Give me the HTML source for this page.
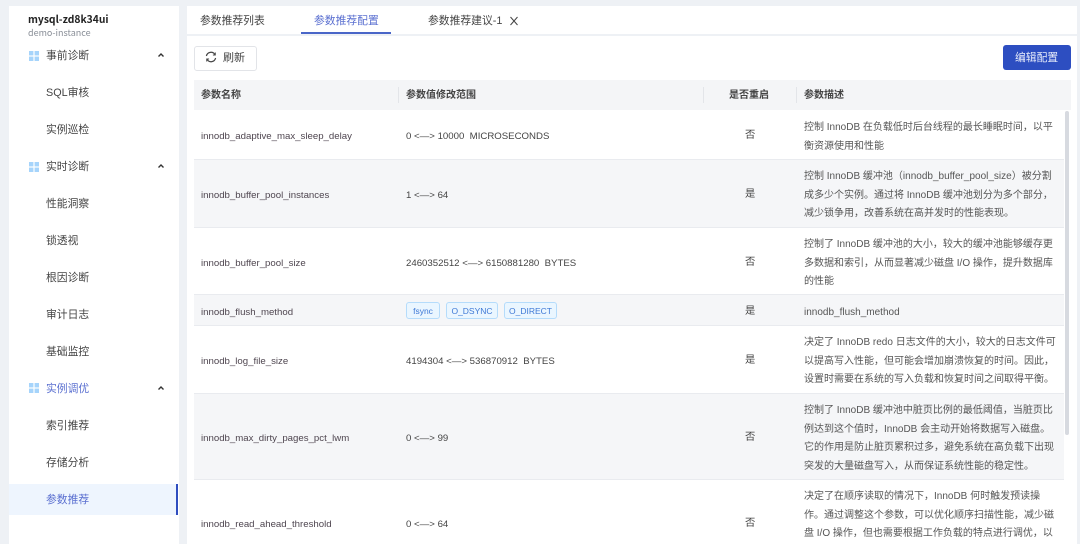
<!DOCTYPE html>
<html lang="zh"><head><meta charset="utf-8"><style>
html,body{margin:0;padding:0}
body{width:1080px;height:544px;overflow:hidden;background:#eef1f5;position:relative;font-family:"Liberation Sans","Noto Sans CJK SC",sans-serif;color:#444;-webkit-font-smoothing:antialiased}
.a{position:absolute;white-space:nowrap}
.box{position:absolute}
.m{font-size:10.8px;left:46px;color:#444;line-height:16px}
.g{width:14px;height:14px;left:27px;position:absolute}
.c{position:absolute;left:156px;margin-top:-1px}
.row{position:absolute;left:194px;width:870px;box-sizing:border-box;border-bottom:1px solid #e9ebef}
.n{font-size:9.65px;left:201px;color:#4f4650;line-height:16px;margin-top:2px}
.r{font-size:9.65px;left:406px;color:#444;line-height:16px;margin-top:2px}
.y{font-size:10.3px;left:745px;color:#444;line-height:16px;margin-top:1px}
.d{font-size:10px;left:804px;color:#555;line-height:18.6px;margin-top:2px}
.h{font-size:10px;font-weight:700;color:#444;line-height:16px;top:88px}
.s{position:absolute;top:87px;width:1px;height:16px;background:#e3e5e9}
.t{position:absolute;top:302px;height:17px;box-sizing:border-box;border:1px solid #b5dcfb;background:#eaf6ff;color:#3f79d6;font-size:8.5px;line-height:16px;border-radius:3px;text-align:center}
.tab{font-size:10.8px;top:13px;line-height:16px;color:#444}
</style></head><body>
<div class="box" style="left:9px;top:6px;width:170px;height:538px;background:#fff"></div>
<div class="box" style="left:187px;top:6px;width:890px;height:28px;background:#fff"></div>
<div class="box" style="left:187px;top:36px;width:890px;height:508px;background:#fff"></div>

<div class="a" style="left:28px;top:11px;font-family:'Noto Sans CJK SC','Liberation Sans',sans-serif;font-size:10.3px;font-weight:700;color:#222;line-height:16px">mysql-zd8k34ui</div>
<div class="a" style="left:28px;top:25px;font-family:'Noto Sans CJK SC','Liberation Sans',sans-serif;font-size:9px;color:#8a8f98;line-height:16px">demo-instance</div>

<svg class="g" style="top:49px" viewBox="0 0 14 14"><g fill="#a6d4fb"><rect x="2" y="2" width="4.4" height="4.4"/><rect x="7.6" y="2" width="4.4" height="4.4"/><rect x="2" y="7.6" width="4.4" height="4.4"/><rect x="7.6" y="7.6" width="4.4" height="4.4"/></g></svg>
<div class="a m" style="top:48px">事前诊断</div>
<svg class="c" style="top:51px" width="10" height="10" viewBox="0 0 10 10"><path d="M2.5 6.5L5 4L7.5 6.5" fill="none" stroke="#333" stroke-width="1.4"/></svg>
<div class="a m" style="top:85px">SQL审核</div>
<div class="a m" style="top:122px">实例巡检</div>
<svg class="g" style="top:160px" viewBox="0 0 14 14"><g fill="#a6d4fb"><rect x="2" y="2" width="4.4" height="4.4"/><rect x="7.6" y="2" width="4.4" height="4.4"/><rect x="2" y="7.6" width="4.4" height="4.4"/><rect x="7.6" y="7.6" width="4.4" height="4.4"/></g></svg>
<div class="a m" style="top:159px">实时诊断</div>
<svg class="c" style="top:162px" width="10" height="10" viewBox="0 0 10 10"><path d="M2.5 6.5L5 4L7.5 6.5" fill="none" stroke="#333" stroke-width="1.4"/></svg>
<div class="a m" style="top:196px">性能洞察</div>
<div class="a m" style="top:233px">锁透视</div>
<div class="a m" style="top:270px">根因诊断</div>
<div class="a m" style="top:307px">审计日志</div>
<div class="a m" style="top:344px">基础监控</div>
<svg class="g" style="top:381px" viewBox="0 0 14 14"><g fill="#a6d4fb"><rect x="2" y="2" width="4.4" height="4.4"/><rect x="7.6" y="2" width="4.4" height="4.4"/><rect x="2" y="7.6" width="4.4" height="4.4"/><rect x="7.6" y="7.6" width="4.4" height="4.4"/></g></svg>
<div class="a m" style="top:381px;color:#5a6fd0">实例调优</div>
<svg class="c" style="top:384px" width="10" height="10" viewBox="0 0 10 10"><path d="M2.5 6.5L5 4L7.5 6.5" fill="none" stroke="#333" stroke-width="1.4"/></svg>
<div class="a m" style="top:418px">索引推荐</div>
<div class="a m" style="top:455px">存储分析</div>
<div class="box" style="left:9px;top:484px;width:169px;height:31px;background:#eef5fe"></div>
<div class="box" style="left:176px;top:484px;width:2px;height:31px;background:#2f4dbf"></div>
<div class="a m" style="top:492px;color:#5a6fd0">参数推荐</div>

<div class="a tab" style="left:200px">参数推荐列表</div>
<div class="a tab" style="left:314px;color:#5a6fd0">参数推荐配置</div>
<div class="box" style="left:301px;top:32px;width:90px;height:2px;background:#4a66c8"></div>
<div class="a tab" style="left:428px">参数推荐建议-1</div>
<svg class="box" style="left:509px;top:15px" width="10" height="12" viewBox="0 0 10 12"><path d="M1.5 2L8.5 10M8.5 2L1.5 10" stroke="#444" stroke-width="1" fill="none"/></svg>

<div class="box" style="left:194px;top:46px;width:61px;height:23px;border:1px solid #e2e4e8;border-radius:3px;background:#fff"></div>
<svg class="box" style="left:205px;top:51px" width="12" height="12" viewBox="0 0 12 12"><path d="M1.4 5A4.7 4.7 0 0 1 9.9 3.4M10.6 7A4.7 4.7 0 0 1 2.1 8.6" fill="none" stroke="#444" stroke-width="1.2"/><path d="M10.3 1.5V4H7.9M1.7 10.5V8H4.1" fill="none" stroke="#444" stroke-width="0.9"/></svg>
<div class="a" style="left:223px;top:50px;font-size:11px;line-height:16px;color:#444">刷新</div>

<div class="box" style="left:1003px;top:45px;width:68px;height:25px;background:#2d4ec1;border-radius:3px"></div>
<div class="a" style="left:1015px;top:50px;font-size:10.8px;line-height:16px;color:#e6ebfa">编辑配置</div>

<div class="box" style="left:194px;top:80px;width:877px;height:30px;background:#f4f5f7"></div>
<div class="a h" style="left:201px">参数名称</div>
<div class="s" style="left:398px"></div>
<div class="a h" style="left:406px">参数值修改范围</div>
<div class="s" style="left:703px"></div>
<div class="a h" style="left:729px">是否重启</div>
<div class="s" style="left:796px"></div>
<div class="a h" style="left:804px">参数描述</div>

<div class="row" style="top:110px;height:50px;background:#fff"></div>
<div class="row" style="top:160px;height:68px;background:#f5f6f8"></div>
<div class="row" style="top:228px;height:67px;background:#fff"></div>
<div class="row" style="top:295px;height:31px;background:#f5f6f8"></div>
<div class="row" style="top:326px;height:68px;background:#fff"></div>
<div class="row" style="top:394px;height:86px;background:#f5f6f8"></div>

<div class="box" style="left:1065px;top:111px;width:4px;height:324px;background:#d7dae0;border-radius:2px"></div>

<div class="a n" style="top:127px">innodb_adaptive_max_sleep_delay</div>
<div class="a r" style="top:127px">0 &lt;—&gt; 10000 &nbsp;MICROSECONDS</div>
<div class="a y" style="top:127px">否</div>
<div class="a d" style="top:117px">控制 InnoDB 在负载低时后台线程的最长睡眠时间，以平<br>衡资源使用和性能</div>

<div class="a n" style="top:186px">innodb_buffer_pool_instances</div>
<div class="a r" style="top:186px">1 &lt;—&gt; 64</div>
<div class="a y" style="top:186px">是</div>
<div class="a d" style="top:166px">控制 InnoDB 缓冲池（innodb_buffer_pool_size）被分割<br>成多少个实例。通过将 InnoDB 缓冲池划分为多个部分，<br>减少锁争用，改善系统在高并发时的性能表现。</div>

<div class="a n" style="top:254px">innodb_buffer_pool_size</div>
<div class="a r" style="top:254px">2460352512 &lt;—&gt; 6150881280 &nbsp;BYTES</div>
<div class="a y" style="top:254px">否</div>
<div class="a d" style="top:234px">控制了 InnoDB 缓冲池的大小，较大的缓冲池能够缓存更<br>多数据和索引，从而显著减少磁盘 I/O 操作，提升数据库<br>的性能</div>

<div class="a n" style="top:303px">innodb_flush_method</div>
<div class="t" style="left:406px;width:34px">fsync</div>
<div class="t" style="left:446px;width:52px">O_DSYNC</div>
<div class="t" style="left:504px;width:53px">O_DIRECT</div>
<div class="a y" style="top:303px">是</div>
<div class="a d" style="top:302px">innodb_flush_method</div>

<div class="a n" style="top:352px">innodb_log_file_size</div>
<div class="a r" style="top:352px">4194304 &lt;—&gt; 536870912 &nbsp;BYTES</div>
<div class="a y" style="top:352px">是</div>
<div class="a d" style="top:332px">决定了 InnoDB redo 日志文件的大小，较大的日志文件可<br>以提高写入性能，但可能会增加崩溃恢复的时间。因此，<br>设置时需要在系统的写入负载和恢复时间之间取得平衡。</div>

<div class="a n" style="top:429px">innodb_max_dirty_pages_pct_lwm</div>
<div class="a r" style="top:429px">0 &lt;—&gt; 99</div>
<div class="a y" style="top:429px">否</div>
<div class="a d" style="top:400px">控制了 InnoDB 缓冲池中脏页比例的最低阈值，当脏页比<br>例达到这个值时，InnoDB 会主动开始将数据写入磁盘。<br>它的作用是防止脏页累积过多，避免系统在高负载下出现<br>突发的大量磁盘写入，从而保证系统性能的稳定性。</div>

<div class="a n" style="top:515px">innodb_read_ahead_threshold</div>
<div class="a r" style="top:515px">0 &lt;—&gt; 64</div>
<div class="a y" style="top:515px">否</div>
<div class="a d" style="top:486px">决定了在顺序读取的情况下，InnoDB 何时触发预读操<br>作。通过调整这个参数，可以优化顺序扫描性能，减少磁<br>盘 I/O 操作，但也需要根据工作负载的特点进行调优，以</div>
</body></html>
